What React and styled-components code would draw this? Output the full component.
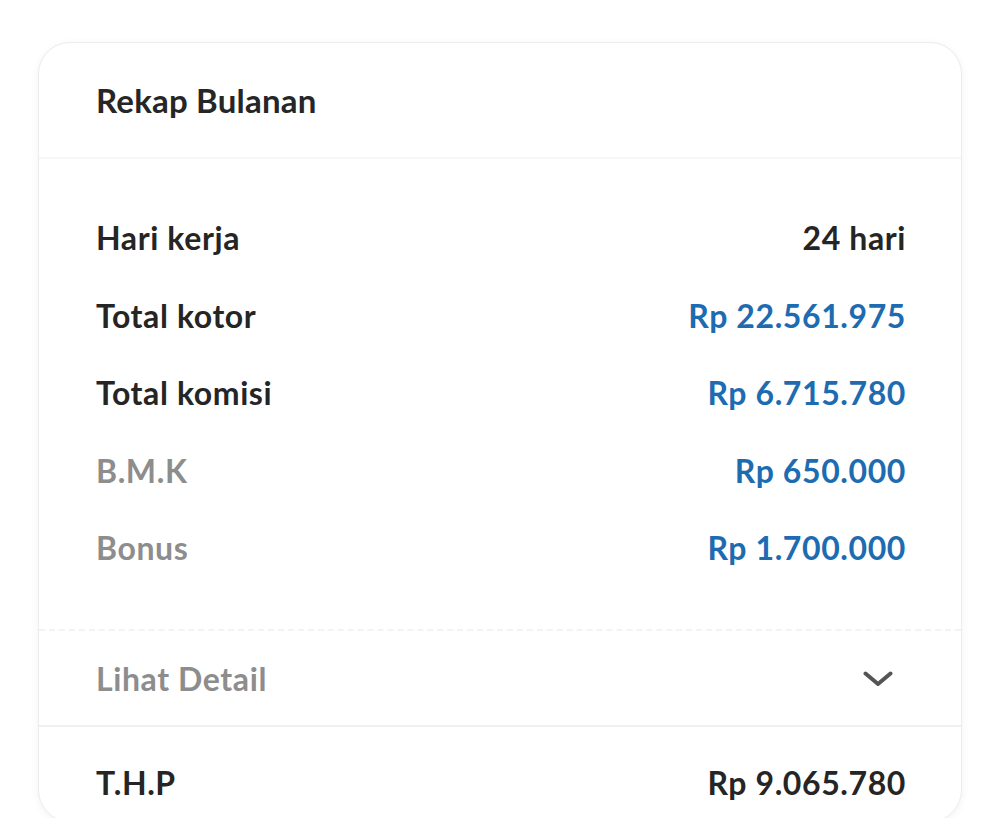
import React from 'react'
import styled, { createGlobalStyle } from 'styled-components'

const GlobalStyle = createGlobalStyle`
    html, body {
        margin: 0;
        padding: 0;
        background: #ffffff;
        font-family: Lato, "Noto Sans", sans-serif;
    }
`

const Page = styled.div`
    height: 818px;
    overflow: hidden;
    padding: 42px 38px 0;
    box-sizing: border-box;
`

const Card = styled.section`
    background: #fff;
    border: 1.5px solid #ececec;
    border-radius: 32px;
    box-shadow: 0 2px 10px rgba(0, 0, 0, 0.05);
    height: 780px;
    box-sizing: border-box;
    overflow: hidden;
    display: flex;
    flex-direction: column;

    & > * {
        flex-shrink: 0;
    }
`

const Header = styled.div`
    height: 114px;
    display: flex;
    align-items: center;
    padding: 0 55px 0 57px;
    border-bottom: 2px solid #f7f7f7;
    font-size: 33px;
    font-weight: 700;
    letter-spacing: 0.2px;
    color: #262626;
`

const Body = styled.div`
    padding: 40px 55px 42px 57px;
    border-bottom: 2px dashed #f3f3f3;
`

const Row = styled.div`
    height: 77.5px;
    display: flex;
    align-items: center;
    justify-content: space-between;
    font-size: 32px;
    font-weight: 700;
    letter-spacing: 0.6px;
`

const Label = styled.span`
    color: ${p => (p.muted ? '#8d8d8d' : '#252525')};
`

const Value = styled.span`
    color: ${p => (p.blue ? '#1d6bb0' : '#252525')};
`

const Toggle = styled.div`
    height: 96px;
    display: flex;
    align-items: center;
    justify-content: space-between;
    padding: 2px 68px 0 57px;
    box-sizing: border-box;
    border-bottom: 2px solid #f0f0f0;
    font-size: 32px;
    font-weight: 700;
    letter-spacing: 0.6px;
    color: #8d8d8d;
`

const Footer = styled(Row)`
    height: 112px;
    padding: 0 55px 0 57px;
`

const rows = [
    { label: 'Hari kerja', value: '24 hari' },
    { label: 'Total kotor', value: 'Rp 22.561.975', blue: true },
    { label: 'Total komisi', value: 'Rp 6.715.780', blue: true },
    { label: 'B.M.K', value: 'Rp 650.000', blue: true, muted: true },
    { label: 'Bonus', value: 'Rp 1.700.000', blue: true, muted: true },
]

const Chevron = () => (
    <svg width="30" height="16" viewBox="0 0 30 16" fill="none">
        <polyline points="2.5,2.5 15,13 27.5,2.5" stroke="#555" strokeWidth="4" strokeLinecap="round" strokeLinejoin="round" />
    </svg>
)

export default function App() {
    return (
        <Page>
            <GlobalStyle />
            <Card>
                <Header>Rekap Bulanan</Header>
                <Body>
                    {rows.map(r => (
                        <Row key={r.label}>
                            <Label muted={r.muted}>{r.label}</Label>
                            <Value blue={r.blue}>{r.value}</Value>
                        </Row>
                    ))}
                </Body>
                <Toggle>
                    <span>Lihat Detail</span>
                    <Chevron />
                </Toggle>
                <Footer>
                    <Label>T.H.P</Label>
                    <Value>Rp 9.065.780</Value>
                </Footer>
            </Card>
        </Page>
    )
}
